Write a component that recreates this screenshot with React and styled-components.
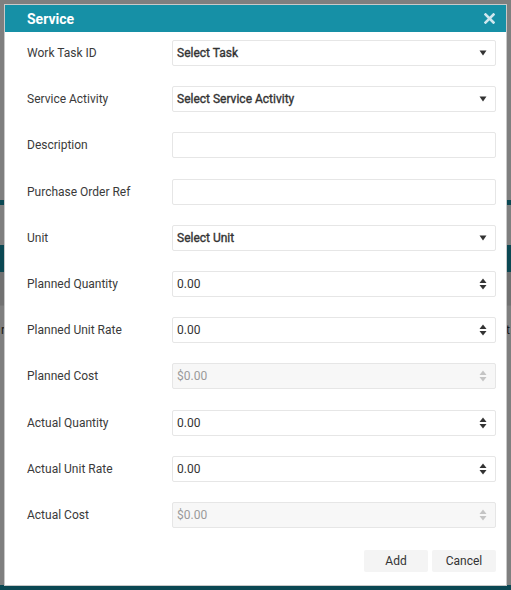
import React from 'react'
import styled, { createGlobalStyle } from 'styled-components'

const GlobalStyle = createGlobalStyle`
  html, body {
    margin: 0;
    padding: 0;
  }
  body {
    font-family: Roboto, "Liberation Sans", Arial, sans-serif;
    background: #fff;
    overflow: hidden;
  }
`

const fields = [
  { label: 'Work Task ID', kind: 'select', value: 'Select Task' },
  { label: 'Service Activity', kind: 'select', value: 'Select Service Activity' },
  { label: 'Description', kind: 'text', value: '' },
  { label: 'Purchase Order Ref', kind: 'text', value: '' },
  { label: 'Unit', kind: 'select', value: 'Select Unit' },
  { label: 'Planned Quantity', kind: 'number', value: '0.00' },
  { label: 'Planned Unit Rate', kind: 'number', value: '0.00' },
  { label: 'Planned Cost', kind: 'number', value: '$0.00', disabled: true },
  { label: 'Actual Quantity', kind: 'number', value: '0.00' },
  { label: 'Actual Unit Rate', kind: 'number', value: '0.00' },
  { label: 'Actual Cost', kind: 'number', value: '$0.00', disabled: true },
]

const CaretDown = () => (
  <svg width="8" height="6" viewBox="0 0 8 6">
    <path d="M0.5 0.5h7L4 5.5z" fill="#333" />
  </svg>
)

const Spinner = ({ disabled }) => (
  <svg width="8" height="12" viewBox="0 0 8 12">
    <path d="M4 0.5L7.5 5H0.5z" fill={disabled ? '#c4c4c4' : '#333'} />
    <path d="M0.5 7h7L4 11.5z" fill={disabled ? '#c4c4c4' : '#333'} />
  </svg>
)

const CloseIcon = () => (
  <svg width="11" height="11" viewBox="0 0 11 11">
    <path d="M1.5 1.5l8 8M9.5 1.5l-8 8" stroke="#cfe7ee" strokeWidth="2.6" strokeLinecap="square" />
  </svg>
)

const Field = ({ label, kind, value, disabled }) => (
  <Row>
    <Label>{label}</Label>
    <Control $disabled={disabled}>
      <Value $kind={kind} $disabled={disabled}>{value}</Value>
      {kind === 'select' && <CaretDown />}
      {kind === 'number' && <Spinner disabled={disabled} />}
    </Control>
  </Row>
)

const App = () => {
  return (
    <>
      <GlobalStyle />
      <Page>
        <TableHead>
          <HeadCell $w={120} />
          <HeadCell $w={100} />
          <HeadCell $w={291} />
        </TableHead>
        <Blank $h={200} />
        <Stripe $h={5} />
        <Blank $h={40} />
        <Stripe $h={27} />
        <SubBar />
        <TextRow>
          <span>r</span>
          <span>t</span>
        </TextRow>
        <Blank $h={243} />
        <Stripe $h={20} />
      </Page>

      <Backdrop>
        <Modal>
          <Header>
            <Title>Service</Title>
            <CloseIcon />
          </Header>
          <Body>
            {fields.map((f) => (
              <Field key={f.label} {...f} />
            ))}
          </Body>
          <Footer>
            <Button>Add</Button>
            <Button>Cancel</Button>
          </Footer>
        </Modal>
      </Backdrop>
    </>
  )
}

const Page = styled.div`
  width: 511px;
  height: 590px;
  display: flex;
  flex-direction: column;
  background: #fff;
`

const TableHead = styled.div`
  display: flex;
  height: 5px;
`

const HeadCell = styled.div`
  width: ${(p) => p.$w}px;
  border-right: 1px solid #ddd;
`

const Blank = styled.div`
  height: ${(p) => p.$h}px;
  flex-shrink: 0;
`

const Stripe = styled.div`
  height: ${(p) => p.$h}px;
  flex-shrink: 0;
  background: #1690a6;
`

const SubBar = styled.div`
  height: 33px;
  flex-shrink: 0;
  background: #e2e2e2;
  border-bottom: 1px solid #eee;
`

const TextRow = styled.div`
  height: 24px;
  flex-shrink: 0;
  margin-top: 12px;
  display: flex;
  justify-content: space-between;
  align-items: center;
  padding: 0 1px;
  font-size: 12px;
  color: #333;
`

const Backdrop = styled.div`
  position: fixed;
  inset: 0;
  background: rgba(0, 0, 0, 0.5);
`

const Modal = styled.div`
  position: absolute;
  top: 4px;
  left: 4px;
  width: 501px;
  height: 580px;
  border: 1px solid #c9c9c9;
  background: #fff;
  display: flex;
  flex-direction: column;
`

const Header = styled.div`
  height: 27px;
  background: #1690a6;
  display: flex;
  align-items: center;
  justify-content: space-between;
  padding: 0 11px 0 22px;
`

const Title = styled.div`
  color: #fff;
  font-size: 14px;
  font-weight: 700;
`

const Body = styled.div`
  display: flex;
  flex-direction: column;
  gap: 20.2px;
  padding: 8px 10px 0 22px;
`

const Row = styled.div`
  display: flex;
  align-items: center;
  height: 26px;
`

const Label = styled.div`
  width: 145px;
  flex-shrink: 0;
  font-size: 12px;
  color: #3a3a3a;
`

const Control = styled.div`
  flex: 1;
  height: 26px;
  box-sizing: border-box;
  border: 1px solid #e6e6e6;
  border-radius: 2px;
  background: ${(p) => (p.$disabled ? '#f7f7f7' : '#fff')};
  display: flex;
  align-items: center;
  justify-content: space-between;
  padding: 0 8px 0 4px;
`

const Value = styled.span`
  font-size: 12px;
  font-weight: 400;
  -webkit-text-stroke: ${(p) => (p.$kind === 'select' ? '0.35px' : '0')};
  color: ${(p) => (p.$disabled ? '#9a9a9a' : '#333')};
`

const Footer = styled.div`
  margin-top: auto;
  display: flex;
  justify-content: flex-end;
  gap: 4px;
  padding: 0 10px 13px 0;
`

const Button = styled.button`
  width: 64px;
  height: 22px;
  border: none;
  border-radius: 2px;
  background: #f4f4f4;
  font-family: Roboto, "Liberation Sans", Arial, sans-serif;
  font-size: 12px;
  color: #333;
  cursor: pointer;
`

export default App
